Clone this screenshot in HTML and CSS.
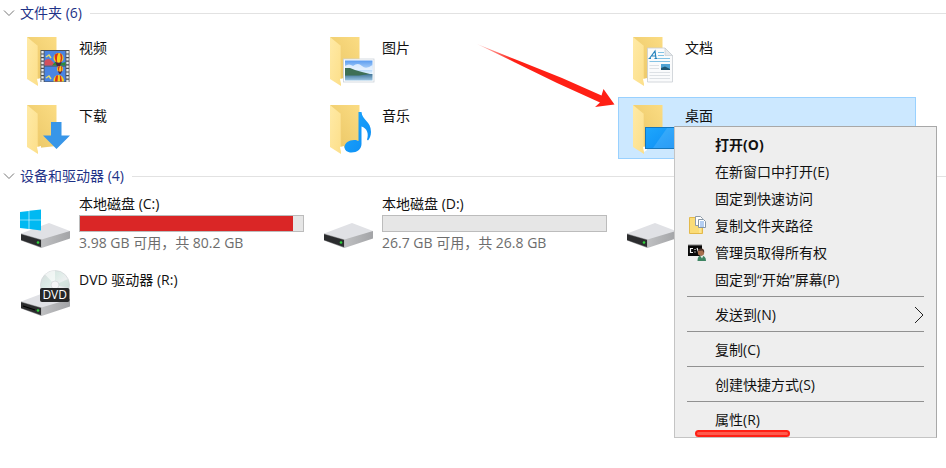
FILE: index.html
```html
<!DOCTYPE html>
<html lang="zh-CN">
<head>
<meta charset="utf-8">
<title>此电脑</title>
<link rel="stylesheet" href="styles.css">
</head>
<body>
<svg class="defs" aria-hidden="true">
  <defs>
    <linearGradient id="back" x1="0" y1="1" x2="1" y2="0"><stop offset="0" stop-color="#e9c564"/><stop offset="1" stop-color="#fbdc83"/></linearGradient>
    <linearGradient id="flap" x1="0" y1="0" x2="1" y2="1"><stop offset="0" stop-color="#ffeaa6"/><stop offset="1" stop-color="#fcdf8a"/></linearGradient>
    <linearGradient id="blue" x1="0" y1="0" x2="1" y2="1"><stop offset="0" stop-color="#1ea7fd"/><stop offset="1" stop-color="#0b8cf4"/></linearGradient>
    <linearGradient id="sky" x1="0" y1="0" x2="0" y2="1"><stop offset="0" stop-color="#5a9cf0"/><stop offset="1" stop-color="#e4f4ff"/></linearGradient>
    <linearGradient id="sea" x1="0" y1="0" x2="0" y2="1"><stop offset="0" stop-color="#3f7396"/><stop offset="1" stop-color="#9cc6e4"/></linearGradient>
    <linearGradient id="side" x1="0" y1="0" x2="1" y2="0"><stop offset="0" stop-color="#bfc0c2"/><stop offset="1" stop-color="#a3a4a7"/></linearGradient>
    <linearGradient id="disc" x1="0" y1="0" x2="1" y2="1"><stop offset="0" stop-color="#d5d9db"/><stop offset=".35" stop-color="#dcebe6"/><stop offset=".6" stop-color="#eef0f1"/><stop offset="1" stop-color="#c3c7ca"/></linearGradient>
    <linearGradient id="fade" gradientUnits="userSpaceOnUse" x1="0" y1="0" x2="36" y2="16"><stop offset="0" stop-color="#ff2015" stop-opacity=".2"/><stop offset="1" stop-color="#ff2015"/></linearGradient>
    <g id="folder">
      <path d="M6 0H35.500V41L17 43Z" fill="url(#back)"/>
      <path d="M6 0 17 9V49L6 42Z" fill="url(#flap)"/>
      <path d="M16 42 20 41V45L17 47Z" fill="#fff"/>
      <path d="M17 9V41" fill="none" stroke="#f3d276" stroke-width=".6"/>
    </g>
    <g id="drive">
      <path d="M0 33.500 28 23 49 31V32L21 40Z" fill="#e0e1e5"/>
      <path d="M20.500 39.500 49 31V38.500L20.500 48Z" fill="url(#side)"/>
      <path d="M0 33.500 20.500 39.500V48L0 40.500Z" fill="#8d8e90"/>
      <path d="M0 34.300 20 40V47L0 40Z" fill="#2b2c2e"/>
      <circle cx="17" cy="42.500" r="1.300" fill="#2ed43a"/>
    </g>
    <g id="balloon">
      <circle cx="0" cy="0" r="5" fill="#f8d21c"/>
      <path d="M-3.600-3.500Q-1.500-5 0-5Q-2.500 0-1 5L-2 4.500Q-4.500 0-3.600-3.500ZM1.500-4.800L3-4Q5 0 2.500 4.400L1.500 4.800Q3 0 1.500-4.800Z" fill="#d6301f"/>
      <path d="M-3.500 3.500-1.500 8H1.500L3.500 3.500Q0 6-3.500 3.500Z" fill="#4a2340"/>
    </g>
  </defs>
</svg>

<main class="files">
  <section>
    <h2 class="group"><button type="button" class="toggle"><svg class="chevron" viewBox="0 0 12 8"><path d="M1 1.500 6 6.500 11 1.500"/></svg>文件夹 (6)</button></h2>
    <div class="tiles">
      <a class="tile" href="#"><svg class="icon" viewBox="0 0 48 48"><use href="#folder"/>
        <rect x="19.500" y="13" width="29" height="32" fill="#4a4e53"/>
        <path d="M21.500 14V45M46.500 14V45" stroke="#e9ecee" stroke-width="2.400" stroke-dasharray="2.400 1.200"/>
        <rect x="23.500" y="14" width="21" height="14.500" fill="#4a84e2"/><path d="M23.500 24Q27 20 31 24L35 28.500H23.500Z" fill="#d4505d"/><path d="M34 25Q39 27 44.500 25V28.500H31Z" fill="#2d8b3b"/>
        <rect x="23.500" y="29.500" width="21" height="15" fill="#4a84e2"/><path d="M25 20 28 18 30 21M25 41 28 39 30 42" stroke="#e6dc6b" fill="none" stroke-width="1.500"/>
        <use href="#balloon" x="37.500" y="21"/><use href="#balloon" transform="translate(39 32) scale(.6)"/>
        <path d="M32.500 44.500Q32.500 38 37.500 38T43 44.500Z" fill="#f8d21c"/><path d="M34 44.500Q34 40 35.500 38.500L37 38.200 36.500 44.500M39 44.500 38.800 38.200 40 39 41 44.500" fill="#d6301f"/></svg><span class="info">视频</span></a>
      <a class="tile" href="#"><svg class="icon" viewBox="0 0 48 48"><use href="#folder"/>
        <rect x="19.500" y="22" width="30.500" height="23" fill="#fff" stroke="#cbd2da" stroke-width=".8"/>
        <rect x="21" y="23.500" width="27.500" height="13.500" fill="url(#sky)"/>
        <path d="M21 29Q25 26 29 29Q34 25 38 29T48.500 28V33H21Z" fill="#f1f8ff" opacity=".8"/>
        <rect x="21" y="37" width="27.500" height="6.500" fill="url(#sea)"/>
        <path d="M21 31 26 31 31 33 38 35 46 37 35 38.500H21Z" fill="#3e6f55"/></svg><span class="info">图片</span></a>
      <a class="tile" href="#"><svg class="icon" viewBox="0 0 48 48"><use href="#folder"/>
        <path d="M20.500 11H38L45.500 18.500V45H20.500Z" fill="#fafbfc" stroke="#c9ced3" stroke-width=".8"/>
        <path d="M38 11V18.500H45.500Z" fill="#e6e9ec" stroke="#c3c8cd" stroke-width=".6"/>
        <path d="M22.500 21.500 28 14 29 21.500M25 19H29M27.500 21.500H30.500M21.500 21.500H24" fill="none" stroke="#2583bd" stroke-width="1.200"/>
        <path d="M31 15.500H37M31 18.500H37M31 21.500H43M22.500 24.500H43" stroke="#83c2e4"/>
        <path d="M22.500 28.500H32M22.500 31.500H32M22.500 35.500H43M22.500 38.500H43M22.500 41.500H43" stroke="#dde1e5"/>
        <path d="M34 27H43V33H34Z" fill="#4fa3d4"/><path d="M34 31 38 29.500 43 32V33H34Z" fill="#1f5774"/></svg><span class="info">文档</span></a>
      <a class="tile" href="#"><svg class="icon" viewBox="0 0 48 48"><use href="#folder"/>
        <path d="M30 17H40.500V30.500H49L35.500 44 22 30.500H30Z" fill="#3896e8"/></svg><span class="info">下载</span></a>
      <a class="tile" href="#"><svg class="icon" viewBox="0 0 48 48"><use href="#folder"/>
        <path d="M34.500 7H37.500C38 15 47 16 47 27 47 31 45.500 33.500 44 35.500L43 34.500C45 29 43 23 37.500 21.500V39C37.500 44 33 47.500 27.500 47.500 23 47.500 20.500 45 20.500 42 20.500 38 25 35 30 35 32 35 33.500 35.500 34.500 36Z" fill="url(#blue)"/></svg><span class="info">音乐</span></a>
      <a class="tile selected" href="#"><svg class="icon" viewBox="0 0 48 48"><use href="#folder"/>
        <rect x="18.500" y="22.500" width="31" height="21" fill="url(#blue)" stroke="#1577bd"/><path d="M40 23H49V43H26Z" fill="#fff" opacity=".13"/></svg><span class="info">桌面</span></a>
    </div>
  </section>

  <section>
    <h2 class="group"><button type="button" class="toggle"><svg class="chevron" viewBox="0 0 12 8"><path d="M1 1.500 6 6.500 11 1.500"/></svg>设备和驱动器 (4)</button></h2>
    <div class="tiles">
      <a class="tile drive" href="#"><svg class="icon" viewBox="0 0 48 48"><use href="#drive"/>
        <path d="M-1 12 7.700 10.900V19.700H-1ZM8.300 10.800 20 9.500V19.700H8.300ZM-1 20.300H7.700V29L-1 27.900ZM8.300 20.300H20V30.500L8.300 29.100Z" fill="#00b9f2"/></svg>
        <span class="info">本地磁盘 (C:)<span class="bar"><span class="used" style="width:95.500%"></span></span><span class="free">3.98 GB 可用，共 80.2 GB</span></span></a>
      <a class="tile drive" href="#"><svg class="icon" viewBox="0 0 48 48"><use href="#drive"/></svg>
        <span class="info">本地磁盘 (D:)<span class="bar"></span><span class="free">26.7 GB 可用，共 26.8 GB</span></span></a>
      <a class="tile drive" href="#"><svg class="icon" viewBox="0 0 48 48"><use href="#drive"/></svg></a>
      <a class="tile drive" href="#"><svg class="icon" viewBox="0 0 48 48"><use href="#drive"/>
        <path d="M2 38 14 42" stroke="#000" stroke-width="1.200"/>
        <circle cx="34" cy="17" r="14.500" fill="url(#disc)" stroke="#d3d6d8" stroke-width=".7"/>
        <path d="M34 17 24 6.500Q29 2.500 34 2.500Z" fill="#fff" opacity=".6"/><path d="M34 17 47 11Q49 16 48 20Z" fill="#c7ddd3" opacity=".6"/>
        <circle cx="34" cy="17" r="4" fill="#f5f5f6" stroke="#d0d3d5" stroke-width=".7"/>
        <rect x="19" y="20" width="29.500" height="14" rx="2" fill="#252627"/>
        <text class="disc-label" x="33.700" y="31" text-anchor="middle">DVD</text></svg>
        <span class="info">DVD 驱动器 (R:)</span></a>
    </div>
  </section>
</main>

<svg class="pointer" viewBox="0 0 138 64" aria-hidden="true"><path d="M0 0 40 16 85 34 124.500 51.500 126.500 45 137.500 60.500 118 63 123 58.500 80 39 38 18.500Z" fill="url(#fade)"/></svg>

<div class="menu" role="menu">
  <button type="button" role="menuitem" class="item default">打开(O)</button>
  <button type="button" role="menuitem" class="item">在新窗口中打开(E)</button>
  <button type="button" role="menuitem" class="item">固定到快速访问</button>
  <button type="button" role="menuitem" class="item"><svg class="glyph" viewBox="0 0 18 18"><path d="M1.500 1.500H9L14.500 5V17.500H1.500Z" fill="#fbdc77" stroke="#e3b94b"/><path d="M12 11V17" stroke="#fff0b4"/><path d="M7.500.5H12.500L14.500 2.500V9.500H7.500Z" fill="#fff" stroke="#8e9ba8"/><path d="M10.500 3.500H15.500L17.500 5.500V11.500H10.500Z" fill="#fff" stroke="#8595a5"/><path d="M12 6H16M12 8H16M12 10H16" stroke="#6b9ee5"/></svg>复制文件夹路径</button>
  <button type="button" role="menuitem" class="item"><svg class="glyph" viewBox="0 0 18 18"><path d="M0 2H14V13H0Z" fill="#090909"/><path d="M0 2H14" stroke="#858585"/><path d="M5 5.500H2.500V9.500H5M7 6V7M7 8.500V9.500M9 5 11 10" fill="none" stroke="#f4f4f4" stroke-width="1.200"/><path d="M9.500 18Q9.500 12.500 13 12.500 18 12.500 18 18Z" fill="#3d8462"/><path d="M12 12.500 14 15.500 15.500 12.500Z" fill="#e7ece6"/><circle cx="13" cy="9.500" r="3.200" fill="#a96f4e"/><path d="M10 8Q10 5 13 5.500 17 5.500 16 10L14.500 7.500Z" fill="#50352b"/></svg>管理员取得所有权</button>
  <button type="button" role="menuitem" class="item">固定到“开始”屏幕(P)</button>
  <hr class="rule">
  <button type="button" role="menuitem" class="item">发送到(N)<svg class="more" viewBox="0 0 10 18"><path d="M1 1 9 9 1 17"/></svg></button>
  <hr class="rule">
  <button type="button" role="menuitem" class="item">复制(C)</button>
  <hr class="rule">
  <button type="button" role="menuitem" class="item">创建快捷方式(S)</button>
  <hr class="rule">
  <button type="button" role="menuitem" class="item">属性(R)</button>
  <span class="underline"></span>
</div>
</body>
</html>
```
FILE: styles.css
```css
* { box-sizing: border-box; }

body {
  margin: 0;
  background: #fff;
  color: #111;
  font: 14px/20px "Open Sans", "Noto Sans CJK SC", sans-serif;
}

button {
  border: 0;
  padding: 0;
  background: none;
  color: inherit;
  font: inherit;
}

.defs { position: absolute; width: 0; height: 0; }

.group {
  display: flex;
  align-items: center;
  gap: 8px;
  height: 26px;
  margin: 0 0 3px;
  font: inherit;
  color: #1e3287;
}

.group::after {
  content: "";
  flex: 1;
  height: 1px;
  background: #e2e2e2;
}

.toggle { display: flex; align-items: center; gap: 5px; padding-left: 3px; }
.chevron { width: 12px; height: 8px; fill: none; stroke: #777; }

.tiles {
  display: grid;
  grid-template-columns: repeat(auto-fill, 298px);
  gap: 6px 5px;
  padding-left: 12px;
  margin-bottom: 4px;
}

.tile {
  display: flex;
  gap: 10px;
  height: 62px;
  padding: 7px 5px 0 8px;
  border: 1px solid transparent;
  color: inherit;
  text-decoration: none;
}

.tile.selected { background: #cce8ff; border-color: #99d1ff; }
.icon { flex: none; width: 48px; height: 48px; overflow: visible; }
.info { flex: 1; padding-top: 1px; }
.drive .info { margin-top: -6px; padding-top: 8px; }
.drive:has(.bar) .info { padding-top: 0; }

.bar {
  display: block;
  height: 17px;
  margin: 1px 0;
  border: 1px solid #bcbcbc;
  background: #e6e6e6;
}

.used { display: block; height: 100%; background: #da2626; }
.free { display: block; color: #6d6d6d; }
.disc-label { font: 12px "Open Sans", sans-serif; fill: #fff; }

.pointer { position: absolute; left: 477px; top: 44px; width: 138px; height: 64px; }

.menu {
  position: absolute;
  left: 674px;
  top: 126px;
  width: 263px;
  padding: 4px 0;
  border: 1px solid #a8a8a8;
  border-left-color: #c4c4c4;
  border-bottom-color: #c4c4c4;
  background: #eee;
}

.item {
  display: flex;
  align-items: center;
  position: relative;
  width: 100%;
  height: 27px;
  padding-left: 40px;
  text-align: left;
}

.default { font-weight: 700; }
.glyph { position: absolute; left: 13px; top: 4px; width: 18px; height: 18px; }
.more { width: 10px; height: 18px; margin: 0 12px 0 auto; fill: none; stroke: #222; }
.rule { height: 1px; margin: 3px 12px 4px; border: 0; background: #919191; }

.underline {
  position: absolute;
  left: 20px;
  bottom: 0;
  width: 95px;
  height: 7px;
  border: 2px solid #ff2015;
  border-radius: 4px;
  background: #ff5a4c;
}
```
